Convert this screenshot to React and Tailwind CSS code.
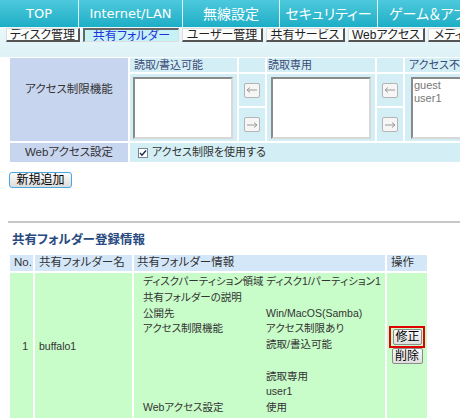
import React from "react";

const jp = "font-['Liberation_Sans','Noto_Sans_CJK_JP',sans-serif] [font-feature-settings:'palt']";

function NavItem({ w, children, size = "text-[14px]", latin }) {
  return (
    <div
      className={`${w} h-full flex items-center justify-center border-r border-[#d8f4f8] text-white shrink-0 whitespace-nowrap overflow-hidden ${size} ${
        latin ? "font-['DejaVu_Sans','Noto_Sans_CJK_JP',sans-serif]" : "font-['Noto_Sans_CJK_JP',sans-serif] [font-feature-settings:'palt']"
      }`}
    >
      {children}
    </div>
  );
}

function SubTab({ w, children, active }) {
  return (
    <div
      className={`${w} h-[14px] shrink-0 flex items-center justify-center text-[12px] leading-none whitespace-nowrap overflow-hidden ${
        active
          ? "bg-[#c6f1f5] text-[#2030e0] border-l-2 border-t-2 border-r border-b border-l-[#666] border-t-[#666] border-r-[#ddd] border-b-[#ddd]"
          : "bg-[#fbfdfd] text-[#222] border-l border-t border-r-2 border-b-2 border-l-[#ddd] border-t-[#ddd] border-r-[#555] border-b-[#555]"
      }`}
    >
      {children}
    </div>
  );
}

function ArrowBtn({ dir }) {
  return (
    <div className="w-[16px] h-[15px] rounded-[2px] border border-[#b4b4b4] bg-[#f6f6f6] flex items-center justify-center">
      <svg width="12" height="8" viewBox="0 0 12 8">
        {dir === "left" ? (
          <path d="M1 4 H11 M1 4 L4 1.5 M1 4 L4 6.5" stroke="#9a9a9a" strokeWidth="1" fill="none" />
        ) : (
          <path d="M1 4 H11 M11 4 L8 1.5 M11 4 L8 6.5" stroke="#9a9a9a" strokeWidth="1" fill="none" />
        )}
      </svg>
    </div>
  );
}

function ListBox({ items = [] }) {
  return (
    <div className="w-full h-full bg-white border-2 border-t-[#8a8a8a] border-l-[#8a8a8a] border-r-[#d8d8d8] border-b-[#d8d8d8] px-[1px] text-[11px] leading-[13px] text-[#777]">
      {items.map((it) => (
        <div key={it}>{it}</div>
      ))}
    </div>
  );
}

function SmallBtn({ children, w }) {
  return (
    <div
      className={`${w} h-[16px] mx-auto flex items-center justify-center rounded-[2px] border border-[#8c8c8c] bg-gradient-to-b from-[#fafafa] to-[#dedede] text-[12px] leading-none text-black`}
    >
      {children}
    </div>
  );
}

export default function App() {
  const labels = [
    "ディスクパーティション領域",
    "共有フォルダーの説明",
    "公開先",
    "アクセス制限機能",
    "",
    "",
    "",
    "",
    "Webアクセス設定",
  ];
  const values = [
    "ディスク1/パーティション1",
    "",
    "Win/MacOS(Samba)",
    "アクセス制限あり",
    "読取/書込可能",
    "",
    "読取専用",
    "user1",
    "使用",
  ];

  return (
    <div className={`w-[460px] h-[418px] overflow-hidden bg-white ${jp}`}>
      {/* top nav */}
      <div className="flex h-[27px] w-max bg-gradient-to-b from-[#4cc9dc] to-[#1aaec6]">
        <NavItem w="w-[79px]" latin size="text-[13px]">TOP</NavItem>
        <NavItem w="w-[104px]" latin size="text-[13px]">Internet/LAN</NavItem>
        <NavItem w="w-[97px]">無線設定</NavItem>
        <NavItem w="w-[98px]">セキュリティー</NavItem>
        <NavItem w="w-[112px]">ゲーム＆アプリ</NavItem>
      </div>

      {/* sub tabs */}
      <div className="h-[30px] bg-gradient-to-b from-[#eaf8fa] to-[#dcf2f6] pt-[1px] pl-[6px]">
        <div className="flex gap-[3px] w-max">
          <SubTab w="w-[74px]">ディスク管理</SubTab>
          <SubTab w="w-[96px]" active>共有フォルダー</SubTab>
          <SubTab w="w-[81px]">ユーザー管理</SubTab>
          <SubTab w="w-[79px]">共有サービス</SubTab>
          <SubTab w="w-[77px]">Webアクセス</SubTab>
          <SubTab w="w-[100px]">メディアサーバー</SubTab>
        </div>
      </div>

      {/* access control table */}
      <div className="ml-[10px] mt-[1px] grid w-max gap-[2px] grid-cols-[118px_107px_26px_108px_26px_90px] grid-rows-[14px_32px_33px_19px] text-[11px] text-[#333]">
        <div className="row-span-3 bg-[#c8d5ef] flex items-center justify-center pb-[20px] text-[11.5px] text-[#333]">
          アクセス制限機能
        </div>
        <div className="bg-[#d3eef5] pl-[4px] flex items-center text-[#3a4a78]">読取/書込可能</div>
        <div className="bg-[#d3eef5]"></div>
        <div className="bg-[#d3eef5] pl-[1px] flex items-center text-[#3a4a78]">読取専用</div>
        <div className="bg-[#d3eef5]"></div>
        <div className="bg-[#d3eef5] pl-[4px] flex items-center text-[#3a4a78] whitespace-nowrap overflow-hidden">アクセス不可</div>

        <div className="row-span-2 bg-[#d3eef5] pl-[3px] pr-[4px] pt-[3px] pb-[2px]">
          <ListBox />
        </div>
        <div className="bg-[#d3eef5] flex items-center justify-center">
          <ArrowBtn dir="left" />
        </div>
        <div className="row-span-2 bg-[#d3eef5] pl-[4px] pr-[4px] pt-[3px] pb-[2px]">
          <ListBox />
        </div>
        <div className="bg-[#d3eef5] flex items-center justify-center">
          <ArrowBtn dir="left" />
        </div>
        <div className="row-span-2 bg-[#d3eef5] pl-[6px] pt-[3px] pb-[2px]">
          <ListBox items={["guest", "user1"]} />
        </div>
        <div className="bg-[#d3eef5] flex items-center justify-center">
          <ArrowBtn dir="right" />
        </div>
        <div className="bg-[#d3eef5] flex items-center justify-center">
          <ArrowBtn dir="right" />
        </div>

        <div className="bg-[#c8d5ef] flex items-center justify-center text-[11.5px]">Webアクセス設定</div>
        <div className="col-span-5 bg-[#d3eef5] flex items-center pl-[8px] gap-[4px]">
          <span className="w-[10px] h-[10px] border border-[#7a8594] bg-white flex items-center justify-center">
            <svg width="8" height="8" viewBox="0 0 8 8">
              <path d="M1 4 L3 6.2 L7 1.5" stroke="#1c2a50" strokeWidth="1.4" fill="none" />
            </svg>
          </span>
          <span className="text-[11px]">アクセス制限を使用する</span>
        </div>
      </div>

      {/* new button */}
      <div className="mt-[10px] ml-[9px] w-[63px] h-[16px] rounded-[3px] border border-[#4aa6dc] bg-gradient-to-b from-[#fbfbfb] to-[#dcdcdc] flex items-center justify-center text-[12px] leading-none text-black">
        新規追加
      </div>

      {/* separator */}
      <div className="mt-[33px] ml-[8px] h-[2px] bg-[#c8c8c8]"></div>

      {/* title */}
      <div className="mt-[10px] ml-[12px] h-[14px] leading-[14px] text-[12.5px] font-bold text-[#284a80]">
        共有フォルダー登録情報
      </div>

      {/* results table */}
      <div className="mt-[8px] ml-[10px] grid w-max gap-[2px] grid-cols-[23px_97px_251px_40px] text-[11px] text-[#333]">
        <div className="h-[16px] bg-[#d3e7f8] pl-[4px] flex items-center text-[11.5px]">No.</div>
        <div className="h-[16px] bg-[#d3e7f8] pl-[4px] flex items-center text-[11.5px]">共有フォルダー名</div>
        <div className="h-[16px] bg-[#d3e7f8] pl-[3px] flex items-center text-[11.5px]">共有フォルダー情報</div>
        <div className="h-[16px] bg-[#d3e7f8] pl-[4px] flex items-center text-[11.5px]">操作</div>

        <div className="bg-[#c8fcc8] flex items-center justify-end pr-[5px] text-[10.5px]">1</div>
        <div className="bg-[#c8fcc8] flex items-center pl-[4px] text-[10.5px]">buffalo1</div>
        <div className="bg-[#c8fcc8] pl-[9px] pt-[1px] pb-[5px] grid grid-cols-[123px_1fr] leading-[15.75px] text-[10.5px]">
          {labels.map((l, i) => (
            <React.Fragment key={i}>
              <div className="whitespace-nowrap h-[15.75px]">{l}</div>
              <div className="whitespace-nowrap h-[15.75px]">{values[i]}</div>
            </React.Fragment>
          ))}
        </div>
        <div className="bg-[#c8fcc8] flex flex-col justify-center pb-[4px]">
          <div className="mx-[2px] border-2 border-[#e00000] px-[2px] py-[1px]">
            <SmallBtn w="w-[29px]">修正</SmallBtn>
          </div>
          <div>
            <SmallBtn w="w-[31px]">削除</SmallBtn>
          </div>
        </div>
      </div>
    </div>
  );
}
